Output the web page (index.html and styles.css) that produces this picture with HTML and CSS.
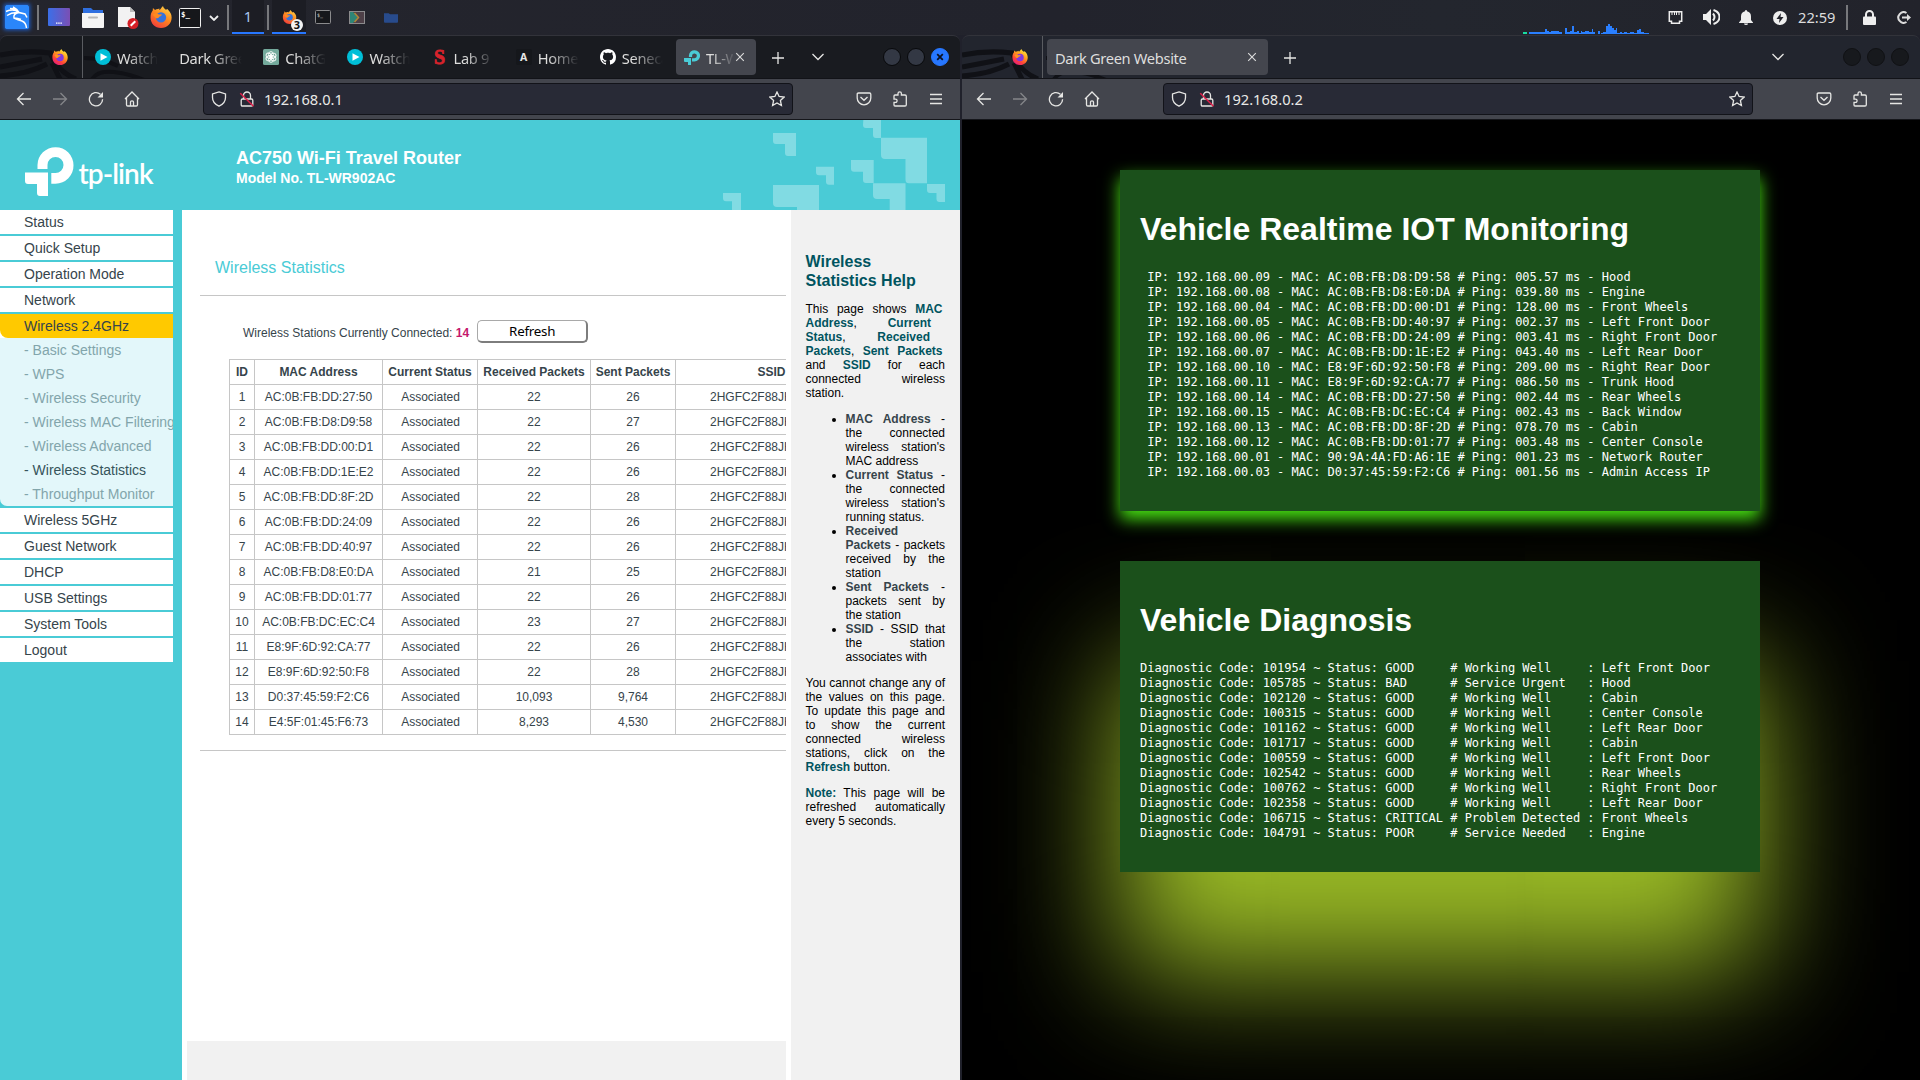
FILE: index.html
```html
<!DOCTYPE html>
<html lang="en">
<head>
<meta charset="utf-8">
<title>Desktop</title>
<link rel="stylesheet" href="styles.css">
</head>
<body>
<svg width="0" height="0" class="defs">
  <defs>
    <linearGradient id="ffg" x1=".8" y1="0" x2=".2" y2="1"><stop offset="0" stop-color="#fff03f"/><stop offset=".4" stop-color="#ff9a1f"/><stop offset=".7" stop-color="#ff4538"/><stop offset="1" stop-color="#e31587"/></linearGradient>
    <linearGradient id="ffo" x1=".8" y1="0" x2=".2" y2="1"><stop offset="0" stop-color="#ffd64a"/><stop offset=".45" stop-color="#ff8b1e"/><stop offset="1" stop-color="#f0383e"/></linearGradient>
    <linearGradient id="desk" x1="0" y1="0" x2="1" y2="0"><stop offset="0" stop-color="#3b6fe8"/><stop offset="1" stop-color="#7b4fb4"/></linearGradient>
  </defs>
  <symbol id="firefox" viewBox="0 0 24 24">
    <path fill="url(#ffg)" d="M12 24C5.300 24 .6 19 .6 12.600c0-3.300.8-5.600 2.400-7.700l.2-2.600 2.300 2c.9-.7 2-1 3.200-1L10.300 2.800 10 4.300c1.700-.2 2-2.700 4.200-4.300.3 1.900 1.600 2.700 3.200 4.200l1.500-.9c3 2.700 4.700 5.500 4.700 9.300C23.600 19.200 18.700 24 12 24z"/>
    <circle cx="12" cy="12.800" r="5.600" fill="#8038e0"/>
    <path fill="#ff9420" d="M3.600 9.500c2-2 4.200-1.700 6.200-.3l3-.1c.2 1.300-.9 2-2.700 2.600-.8 1.900-2.500 1.900-3.600 1.700z"/>
  </symbol>
  <symbol id="firefox-old" viewBox="0 0 24 24">
    <path fill="url(#ffo)" d="M12 24C5.300 24 .6 19 .6 12.600c0-3.300.8-5.600 2.400-7.700l.2-2.600 2.300 2c.9-.7 2-1 3.200-1L10.300 2.800 10 4.300c1.700-.2 2-2.700 4.200-4.300.3 1.900 1.600 2.700 3.200 4.200l1.500-.9c3 2.700 4.700 5.500 4.700 9.300C23.600 19.200 18.700 24 12 24z"/>
    <circle cx="12" cy="12.500" r="5.600" fill="#3573dd"/>
    <path fill="#ff8a20" d="M3 9.500c2-2 4.800-1.700 6.800-.3l3-.1c.2 1.300-.9 2-2.700 2.600-.8 1.900-2.500 1.900-3.600 1.700z"/>
  </symbol>
  <symbol id="back" viewBox="0 0 16 16"><path d="M15 8H1.500M7.500 2l-6 6 6 6"/></symbol>
  <symbol id="forward" viewBox="0 0 16 16"><path d="M1 8h13.500M8.500 2l6 6-6 6"/></symbol>
  <symbol id="reload" viewBox="0 0 16 16"><path d="M14.600 8.200A6.600 6.600 0 1 1 12.400 3.300"/><path class="fill" d="M15 1v5.500H9.500z"/></symbol>
  <symbol id="home" viewBox="0 0 16 16"><path d="M1 8l7-7 7 7M2.500 7v6.700q0 1.300 1.300 1.300h8.400q1.300 0 1.300-1.300V7M6.500 15v-4q0-1.200 1.500-1.200T9.500 11v4"/></symbol>
  <symbol id="shield" viewBox="0 0 16 16"><path d="M8 .9L14.500 3v3.500c0 4-2.600 7-6.500 8.700C4.100 13.500 1.500 10.500 1.500 6.500V3z"/></symbol>
  <symbol id="lock-off" viewBox="0 0 16 16"><path d="M4.500 8V4.500a3.500 3.500 0 0 1 7 0V8M3.500 8h9q1.300 0 1.300 1.300v4.400q0 1.300-1.300 1.300h-9q-1.300 0-1.300-1.300V9.300Q2.200 8 3.500 8z"/><path d="M1.300 2.300l13.200 12.900" class="slash"/></symbol>
  <symbol id="star" viewBox="0 0 16 16"><path d="M8 1l2.100 4.500 5 .6-3.700 3.400 1 5L8 12l-4.400 2.500 1-5L.9 6.100l5-.6z"/></symbol>
  <symbol id="pocket" viewBox="0 0 16 16"><path d="M2.500 2h11q1.300 0 1.300 1.300V7A6.800 6.800 0 0 1 1.200 7V3.300Q1.200 2 2.500 2z"/><path d="M4.500 6L8 9.300 11.500 6"/></symbol>
  <symbol id="puzzle" viewBox="0 0 16 16"><path d="M2 5q0-1 1-1h3V2.600a1.700 1.700 0 0 1 3.400 0V4H13q1.300 0 1.300 1.300v8.500q0 1.200-1.300 1.200H3q-1 0-1-1v-2.600h1.500a1.600 1.600 0 0 0 0-3.200H2z"/></symbol>
  <symbol id="menu" viewBox="0 0 16 16"><path d="M2 3.500h12M2 8h12M2 12.500h12"/></symbol>
  <symbol id="plus" viewBox="0 0 16 16"><path d="M8 2v12M2 8h12"/></symbol>
  <symbol id="chev" viewBox="0 0 16 16"><path d="M2.500 5L8 10.500 13.500 5"/></symbol>
  <symbol id="x" viewBox="0 0 10 10"><path d="M1.200 1.200l7.600 7.600M8.800 1.200L1.200 8.800"/></symbol>
  <symbol id="play" viewBox="0 0 16 16"><circle cx="8" cy="8" r="8" fill="#00bfd8"/><path fill="#fff" d="M5.500 4.200l7 3.800-7 3.800z"/></symbol>
  <symbol id="wings" viewBox="0 0 146 42">
    <path fill="none" stroke="#101116" stroke-width="5" d="M0 19Q25 14 50 17 58 36 76 43M0 31Q22 27 42 23M0 40Q28 38 47 28M52 27l8 16"/>
    <path fill="none" stroke="#101116" stroke-width="4" d="M92 43q6-9 22-7t30 8M84 22q18 0 34 8"/>
  </symbol>
</svg>

<header class="panel">
  <svg class="kali" viewBox="0 0 24 24"><rect width="24" height="24" rx="1.500" fill="#2a86fa"/><path fill="none" stroke="#fff" stroke-width="1.500" d="M1 6.500Q8 3.500 14 7M2 10.500Q7 7 13 7.500M5 3.500q6 0 9 4M8 2q4 2 6 5.500l6 1.500 2 3.500M14 7.500q-6 1-5 5.500 4 2 8 3 4 1.500 4.500 7M9 13q4 0 7 1.500"/></svg>
  <i class="sep s1"></i>
  <svg class="p-desk" viewBox="0 0 22 18"><rect width="22" height="18" rx="1" fill="url(#desk)"/><path stroke="#fff" stroke-width="1.300" stroke-dasharray="1.500 .7" d="M8 15.200h6.200"/></svg>
  <svg class="p-files" viewBox="0 0 22 20"><path fill="#2f6fe0" d="M1 0h8l2 2h10v6H1z"/><path fill="#f4f4f4" d="M0 5h22v14q0 1-1 1H1q-1 0-1-1z"/><path stroke="#b9b9b9" stroke-width="2" stroke-linecap="round" d="M7 9.500h8"/></svg>
  <svg class="p-doc" viewBox="0 0 22 22"><path fill="#f2f2f2" d="M0 0h12l5 5v15H0z"/><path fill="#bbb" d="M12 0l5 5h-5z"/><circle cx="15" cy="16.500" r="5.500" fill="#d41f26"/><path stroke="#fff" stroke-width="2" d="M12.700 18.800l4.600-4.600"/></svg>
  <svg class="p-ff"><use href="#firefox-old"/></svg>
  <svg class="p-term" viewBox="0 0 22 20"><rect x=".5" y=".5" width="21" height="19" rx="1" fill="#16171b" stroke="#f0f0f0"/><text x="2" y="9" class="prompt">$_</text></svg>
  <svg class="p-chev" viewBox="0 0 10 6"><path d="M1 1l4 4 4-4" fill="none" stroke="#eee" stroke-width="1.800"/></svg>
  <i class="sep s2"></i>
  <div class="workspace">1</div>
  <i class="sep s3"></i>
  <div class="task-ff"><svg class="task-ico"><use href="#firefox-old"/></svg><b class="badge">3</b></div>
  <svg class="t-term" viewBox="0 0 16 14"><rect x=".5" y=".5" width="15" height="13" rx="1" fill="#16171b" stroke="#8b8b8d"/><text x="2" y="6.500" class="prompt-s">$_</text></svg>
  <svg class="t-code" viewBox="0 0 16 13"><rect x=".5" y=".5" width="15" height="12" fill="#4e4048" stroke="#8b8b8d"/><path fill="#2f8577" d="M1 1h3l5 5.500L4 12H1z"/><path fill="none" stroke="#b18637" stroke-width="1.500" d="M5.500 2l4 4.500-4 4.500"/></svg>
  <svg class="t-folder" viewBox="0 0 15 11"><path fill="#284b8c" d="M0 1h5l1.500 1H15v8q0 1-1 1H1q-1 0-1-1z"/></svg>
  <span class="grow"></span>
  <svg class="graph" viewBox="0 0 134 10"><path fill="#19dca0" d="M0 8h4v2H0z"/><path fill="#2a7fff" d="M6 8h16V5h2v2h2v1h2V7h8v1h3v2H6zM42 4h2v4h3V7h2V2h2v6h3V7h2v2h2V7h1v1h3V7h4v1h3V5h1v3h2v2H42zM75 7h2v3h-2zM78 9h2V8h3V2h2V0h2v2h2v2h2v2h2V4h1v5h3V8h2v1h2V8h3v1h3V8h4v1h3V6h2V5h2v3h3v1h5v1H78z"/></svg>
  <svg class="r-net" viewBox="0 0 14 13"><path fill="none" stroke="#eee" stroke-width="1.500" d="M.8.8h12.400v9.400H11v2H3v-2H.8z"/><path stroke="#eee" d="M3.500 1v3M6 1v3M8 1v3M10.500 1v3"/></svg>
  <svg class="r-vol" viewBox="0 0 17 16"><path fill="#eee" d="M0 5h3l5-5v16l-5-5H0z"/><path fill="none" stroke="#eee" stroke-width="2" d="M10 4.500q3 3.500 0 7M10.500 1q6 2 6 7t-6 7"/></svg>
  <svg class="r-bell" viewBox="0 0 14 15"><path fill="#eee" d="M7 0q1 0 1 1.200 4 .8 4 5.300v3.500l2 2.500v.5H0v-.5L2 10V6.500Q2 2 6 1.200 6 0 7 0zM5 13.500h4Q9 15 7 15t-2-1.500z"/></svg>
  <svg class="r-pow" viewBox="0 0 14 14"><circle cx="7" cy="7" r="7" fill="#eee"/><path fill="#23242c" d="M8 2L3.500 8H6.500L6 12 10.500 6H7.500z"/></svg>
  <span class="clock">22:59</span>
  <i class="sep s4"></i>
  <svg class="r-lock" viewBox="0 0 13 15"><path fill="none" stroke="#eee" stroke-width="2" d="M3 7V4.500a3.500 3.500 0 0 1 7 0V7"/><rect y="6.500" width="13" height="8.500" rx="1" fill="#eee"/></svg>
  <svg class="r-out" viewBox="0 0 14 13"><path fill="none" stroke="#ddd" stroke-width="2" d="M9.500 2A5.300 5.300 0 1 0 9.500 11"/><path fill="#ddd" d="M5 5.500h5V3l4 3.500L10 10V7.500H5z"/></svg>
</header>

<main class="desktop">
<section class="window win-left">
  <div class="titlebar">
    <svg class="wings"><use href="#wings"/></svg>
    <div class="pinned"><svg class="fav"><use href="#firefox"/></svg></div>
    <div class="tab"><svg class="fav"><use href="#play"/></svg><span class="tt">Watch</span></div>
    <div class="tab"><span class="tt">Dark Green</span></div>
    <div class="tab"><svg class="fav" viewBox="0 0 16 16"><rect width="16" height="16" rx="1.500" fill="#74aa9c"/><g fill="none" stroke="#fff" stroke-width=".9"><ellipse cx="8" cy="5.600" rx="2.400" ry="3"/><ellipse cx="8" cy="5.600" rx="2.400" ry="3" transform="rotate(60 8 8)"/><ellipse cx="8" cy="5.600" rx="2.400" ry="3" transform="rotate(120 8 8)"/><ellipse cx="8" cy="5.600" rx="2.400" ry="3" transform="rotate(180 8 8)"/><ellipse cx="8" cy="5.600" rx="2.400" ry="3" transform="rotate(240 8 8)"/><ellipse cx="8" cy="5.600" rx="2.400" ry="3" transform="rotate(300 8 8)"/></g></svg><span class="tt">ChatGPT</span></div>
    <div class="tab"><svg class="fav"><use href="#play"/></svg><span class="tt">Watch</span></div>
    <div class="tab"><svg class="fav" viewBox="0 0 16 16"><text x="2" y="15" class="seneca">S</text></svg><span class="tt">Lab 9 | S</span></div>
    <div class="tab"><svg class="fav" viewBox="0 0 16 16"><rect width="16" height="16" rx="2" fill="#15171b"/><text x="4" y="12" class="fav-a">A</text></svg><span class="tt">Home |</span></div>
    <div class="tab"><svg class="fav" viewBox="0 0 16 16"><path fill="#fff" d="M8 0C3.580 0 0 3.580 0 8c0 3.540 2.290 6.530 5.470 7.590.4.070.55-.17.55-.38 0-.19-.01-.82-.01-1.490-2.010.37-2.530-.49-2.690-.94-.09-.23-.48-.94-.82-1.130-.28-.15-.68-.52-.01-.53.63-.01 1.080.58 1.230.82.72 1.210 1.870.87 2.330.66.070-.52.28-.87.51-1.070-1.780-.2-3.640-.89-3.640-3.950 0-.87.31-1.590.82-2.150-.08-.2-.36-1.020.08-2.120 0 0 .67-.21 2.200.82.64-.18 1.320-.27 2-.27s1.360.09 2 .27c1.530-1.040 2.200-.82 2.200-.82.44 1.100.16 1.920.08 2.120.51.56.82 1.270.82 2.150 0 3.070-1.870 3.750-3.650 3.950.29.25.54.73.54 1.480 0 1.070-.01 1.930-.01 2.200 0 .21.15.46.55.38A8.010 8.010 0 0 0 16 8c0-4.420-3.580-8-8-8z"/></svg><span class="tt">Seneca</span></div>
    <div class="tab active"><svg class="fav" viewBox="0 0 16 16"><path fill="none" stroke="#4acbd6" stroke-width="3.200" d="M6.500 8V6.500a4 4 0 1 1 4 4.300H8"/><path fill="#4acbd6" d="M0 9h7v7H4v-3H1q-1 0-1-1z"/></svg><span class="tt">TL-WR</span><svg class="close"><use href="#x"/></svg></div>
    <svg class="ico nt"><use href="#plus"/></svg>
    <svg class="ico all"><use href="#chev"/></svg>
    <span class="grow"></span>
    <div class="controls"><i></i><i></i><i class="c-close"><svg viewBox="0 0 10 10"><path d="M1.500 1.500l7 7M8.500 1.500l-7 7"/></svg></i></div>
  </div>
  <nav class="toolbar">
    <div class="slot"><svg class="ico"><use href="#back"/></svg></div>
    <div class="slot dim"><svg class="ico"><use href="#forward"/></svg></div>
    <div class="slot"><svg class="ico"><use href="#reload"/></svg></div>
    <div class="slot"><svg class="ico"><use href="#home"/></svg></div>
    <div class="urlbar"><svg class="ico"><use href="#shield"/></svg><svg class="ico lk"><use href="#lock-off"/></svg><span class="url">192.168.0.1</span><svg class="ico"><use href="#star"/></svg></div>
    <span class="grow"></span>
    <div class="slot"><svg class="ico"><use href="#pocket"/></svg></div>
    <div class="slot"><svg class="ico"><use href="#puzzle"/></svg></div>
    <div class="slot"><svg class="ico"><use href="#menu"/></svg></div>
  </nav>

  <div class="router">
    <div class="banner">
      <svg class="tplink" viewBox="0 0 132 52"><path fill="#fff" d="M12.500 23V19a18 18 0 0 1 36 .3 18 18 0 0 1-18 18.400h-4.200V27h4a8 8 0 0 0 8.200-8 8 8 0 0 0-16 0v4zM0 26.500h23V50h-8q-3 0-3-3v-9H3q-3 0-3-3z"/><text x="53.500" y="38" class="wordmark" textLength="75">tp-link</text></svg>
      <div class="model"><div class="m1">AC750 Wi-Fi Travel Router</div><div class="m2">Model No. TL-WR902AC</div></div>
      <svg class="decor" viewBox="720 0 240 90" fill="#81dbe3"><path d="M863.300 0H881V18h-5q-3 0-3-3V8h-7q-3 0-3-3zM881 17.700h46v45.600h-18q-3.500 0-3.500-3.500V39H885q-4 0-4-4zM773 13h23v23h-8q-3 0-3-3v-9h-9q-3 0-3-3zM816 46.700h18v18h-5q-3 0-3-3v-6.400h-7q-3 0-3-3zM851 40h22.700v23H866q-3 0-3-3v-8.300h-9q-3 0-3-3zM873 63.300h32.500V90h-15.800V79H877q-4 0-4-4zM927 64h18v18h-5.500q-3 0-3-3v-6H930q-3 0-3-3zM773 65h46v25h-22v-3h-20q-4 0-4-4zM723 73h18v17h-9v-8.700h-6q-3 0-3-3z"/></svg>
    </div>
    <div class="frames">
      <ul class="menu">
        <li>Status</li><li>Quick Setup</li><li>Operation Mode</li><li>Network</li>
        <li class="open"><span>Wireless 2.4GHz</span></li>
        <li class="group">
          <div>- Basic Settings</div><div>- WPS</div><div>- Wireless Security</div><div>- Wireless MAC Filtering</div><div>- Wireless Advanced</div><div class="cur">- Wireless Statistics</div><div>- Throughput Monitor</div>
        </li>
        <li>Wireless 5GHz</li><li>Guest Network</li><li>DHCP</li><li>USB Settings</li><li>System Tools</li><li>Logout</li>
      </ul>
      <div class="content">
        <h2>Wireless Statistics</h2>
        <div class="rule"></div>
        <div class="count"><span>Wireless Stations Currently Connected: <b>14</b></span><button>Refresh</button></div>
        <table>
          <tr><th class="c1">ID</th><th class="c2">MAC Address</th><th class="c3">Current Status</th><th class="c4">Received Packets</th><th class="c5">Sent Packets</th><th class="c6">SSID</th></tr>
          <tr><td>1</td><td>AC:0B:FB:DD:27:50</td><td>Associated</td><td>22</td><td>26</td><td>2HGFC2F88JH</td></tr>
          <tr><td>2</td><td>AC:0B:FB:D8:D9:58</td><td>Associated</td><td>22</td><td>27</td><td>2HGFC2F88JH</td></tr>
          <tr><td>3</td><td>AC:0B:FB:DD:00:D1</td><td>Associated</td><td>22</td><td>26</td><td>2HGFC2F88JH</td></tr>
          <tr><td>4</td><td>AC:0B:FB:DD:1E:E2</td><td>Associated</td><td>22</td><td>26</td><td>2HGFC2F88JH</td></tr>
          <tr><td>5</td><td>AC:0B:FB:DD:8F:2D</td><td>Associated</td><td>22</td><td>28</td><td>2HGFC2F88JH</td></tr>
          <tr><td>6</td><td>AC:0B:FB:DD:24:09</td><td>Associated</td><td>22</td><td>26</td><td>2HGFC2F88JH</td></tr>
          <tr><td>7</td><td>AC:0B:FB:DD:40:97</td><td>Associated</td><td>22</td><td>26</td><td>2HGFC2F88JH</td></tr>
          <tr><td>8</td><td>AC:0B:FB:D8:E0:DA</td><td>Associated</td><td>21</td><td>25</td><td>2HGFC2F88JH</td></tr>
          <tr><td>9</td><td>AC:0B:FB:DD:01:77</td><td>Associated</td><td>22</td><td>26</td><td>2HGFC2F88JH</td></tr>
          <tr><td>10</td><td>AC:0B:FB:DC:EC:C4</td><td>Associated</td><td>23</td><td>27</td><td>2HGFC2F88JH</td></tr>
          <tr><td>11</td><td>E8:9F:6D:92:CA:77</td><td>Associated</td><td>22</td><td>26</td><td>2HGFC2F88JH</td></tr>
          <tr><td>12</td><td>E8:9F:6D:92:50:F8</td><td>Associated</td><td>22</td><td>28</td><td>2HGFC2F88JH</td></tr>
          <tr><td>13</td><td>D0:37:45:59:F2:C6</td><td>Associated</td><td>10,093</td><td>9,764</td><td>2HGFC2F88JH</td></tr>
          <tr><td>14</td><td>E4:5F:01:45:F6:73</td><td>Associated</td><td>8,293</td><td>4,530</td><td>2HGFC2F88JH</td></tr>
        </table>
        <div class="rule r2"></div>
        <div class="grow"></div>
        <div class="footer"></div>
      </div>
      <aside class="help">
        <h3>Wireless<br>Statistics Help</h3>
        <div class="intro">
          <div class="l1">This page shows <b>MAC</b></div>
          <div class="l2"><b>Address</b>, <b>Current</b></div>
          <div class="l3"><b>Status</b>, <b>Received</b></div>
          <div class="l1"><b>Packets</b>, <b>Sent Packets</b></div>
          <div>and <b>SSID</b> for each</div>
          <div>connected wireless</div>
          <div class="last">station.</div>
        </div>
        <ul>
          <li><b>MAC Address</b> - the connected wireless station's MAC address</li>
          <li><b>Current Status</b> - the connected wireless station's running status.</li>
          <li><b>Received Packets</b> - packets received by the station</li>
          <li><b>Sent Packets</b> - packets sent by the station</li>
          <li><b>SSID</b> - SSID that the station associates with</li>
        </ul>
        <p>You cannot change any of the values on this page. To update this page and to show the current connected wireless stations, click on the <b>Refresh</b> button.</p>
        <p><b>Note:</b> This page will be refreshed automatically every 5 seconds.</p>
      </aside>
    </div>
  </div>
</section>

<section class="window win-right">
  <div class="titlebar">
    <svg class="wings"><use href="#wings"/></svg>
    <div class="pinned"><svg class="fav"><use href="#firefox"/></svg></div>
    <div class="tab active wide"><span class="tt">Dark Green Website</span><svg class="close"><use href="#x"/></svg></div>
    <svg class="ico nt"><use href="#plus"/></svg>
    <span class="grow"></span>
    <svg class="ico all"><use href="#chev"/></svg>
    <div class="controls"><i></i><i></i><i></i></div>
  </div>
  <nav class="toolbar">
    <div class="slot"><svg class="ico"><use href="#back"/></svg></div>
    <div class="slot dim"><svg class="ico"><use href="#forward"/></svg></div>
    <div class="slot"><svg class="ico"><use href="#reload"/></svg></div>
    <div class="slot"><svg class="ico"><use href="#home"/></svg></div>
    <div class="urlbar"><svg class="ico"><use href="#shield"/></svg><svg class="ico lk"><use href="#lock-off"/></svg><span class="url">192.168.0.2</span><svg class="ico"><use href="#star"/></svg></div>
    <span class="grow"></span>
    <div class="slot"><svg class="ico"><use href="#pocket"/></svg></div>
    <div class="slot"><svg class="ico"><use href="#puzzle"/></svg></div>
    <div class="slot"><svg class="ico"><use href="#menu"/></svg></div>
  </nav>
  <div class="vehicle">
    <article class="card realtime">
      <h1>Vehicle Realtime IOT Monitoring</h1>
<pre> IP: 192.168.00.09 - MAC: AC:0B:FB:D8:D9:58 # Ping: 005.57 ms - Hood
 IP: 192.168.00.08 - MAC: AC:0B:FB:D8:E0:DA # Ping: 039.80 ms - Engine
 IP: 192.168.00.04 - MAC: AC:0B:FB:DD:00:D1 # Ping: 128.00 ms - Front Wheels
 IP: 192.168.00.05 - MAC: AC:0B:FB:DD:40:97 # Ping: 002.37 ms - Left Front Door
 IP: 192.168.00.06 - MAC: AC:0B:FB:DD:24:09 # Ping: 003.41 ms - Right Front Door
 IP: 192.168.00.07 - MAC: AC:0B:FB:DD:1E:E2 # Ping: 043.40 ms - Left Rear Door
 IP: 192.168.00.10 - MAC: E8:9F:6D:92:50:F8 # Ping: 209.00 ms - Right Rear Door
 IP: 192.168.00.11 - MAC: E8:9F:6D:92:CA:77 # Ping: 086.50 ms - Trunk Hood
 IP: 192.168.00.14 - MAC: AC:0B:FB:DD:27:50 # Ping: 002.44 ms - Rear Wheels
 IP: 192.168.00.15 - MAC: AC:0B:FB:DC:EC:C4 # Ping: 002.43 ms - Back Window
 IP: 192.168.00.13 - MAC: AC:0B:FB:DD:8F:2D # Ping: 078.70 ms - Cabin
 IP: 192.168.00.12 - MAC: AC:0B:FB:DD:01:77 # Ping: 003.48 ms - Center Console
 IP: 192.168.00.01 - MAC: 90:9A:4A:FD:A6:1E # Ping: 001.23 ms - Network Router
 IP: 192.168.00.03 - MAC: D0:37:45:59:F2:C6 # Ping: 001.56 ms - Admin Access IP</pre>
    </article>
    <article class="card diagnosis">
      <h1>Vehicle Diagnosis</h1>
<pre>Diagnostic Code: 101954 ~ Status: GOOD     # Working Well     : Left Front Door
Diagnostic Code: 105785 ~ Status: BAD      # Service Urgent   : Hood
Diagnostic Code: 102120 ~ Status: GOOD     # Working Well     : Cabin
Diagnostic Code: 100315 ~ Status: GOOD     # Working Well     : Center Console
Diagnostic Code: 101162 ~ Status: GOOD     # Working Well     : Left Rear Door
Diagnostic Code: 101717 ~ Status: GOOD     # Working Well     : Cabin
Diagnostic Code: 100559 ~ Status: GOOD     # Working Well     : Left Front Door
Diagnostic Code: 102542 ~ Status: GOOD     # Working Well     : Rear Wheels
Diagnostic Code: 100762 ~ Status: GOOD     # Working Well     : Right Front Door
Diagnostic Code: 102358 ~ Status: GOOD     # Working Well     : Left Rear Door
Diagnostic Code: 106715 ~ Status: CRITICAL # Problem Detected : Front Wheels
Diagnostic Code: 104791 ~ Status: POOR     # Service Needed   : Engine</pre>
    </article>
  </div>
</section>
</main>
</body>
</html>
```
FILE: styles.css
```css
* { box-sizing: border-box; }
body { margin: 0; width: 1920px; height: 1080px; overflow: hidden; display: flex; flex-direction: column; background: #20222b; font-family: "Noto Sans", sans-serif; font-size: 14.67px; color: #e8e8e6; }
svg { display: block; flex: none; }
ul, p, h1, h2, h3, pre { margin: 0; padding: 0; }
.defs { position: absolute; }
.grow { flex: 1; }

/* top panel */
.panel { height: 35px; flex: none; display: flex; align-items: center; background: linear-gradient(90deg, #24252d, #22232c 55%, #23262e 75%, #22232b); }
.kali { width: 24px; height: 24px; margin: 0 8px 1px 5px; box-shadow: 0 0 4px 1px #1d5fd0; }
.sep { width: 2px; height: 25px; background: #77787c; }
.s1 { margin-right: 9px; }
.p-desk { width: 22px; height: 18px; margin: 0 12px 2px 0; }
.p-files { width: 22px; height: 20px; margin-right: 14px; }
.p-doc { width: 22px; height: 22px; margin-right: 10px; }
.p-ff { width: 22px; height: 22px; margin: 0 7px 1px 0; }
.p-term { width: 22px; height: 20px; margin-right: 8px; }
.p-chev { width: 10px; height: 6px; margin-right: 8px; }
.prompt { font: bold 7.5px "DejaVu Sans Mono", monospace; fill: #fff; }
.prompt-s { font: bold 5px "DejaVu Sans Mono", monospace; fill: #aaa; }
.s2 { margin-right: 3px; }
.workspace { width: 32px; height: 34px; align-self: flex-start; background: #1c1d24; border-bottom: 2px solid #2777ff; text-align: center; line-height: 32px; color: #a9c8ef; }
.s3 { margin: 0 3px 0 3px; }
.task-ff { width: 34px; height: 34px; align-self: flex-start; background: #1c1d24; border-bottom: 2px solid #2777ff; position: relative; display: flex; padding: 10px 0 0 10px; }
.task-ico { width: 15px; height: 14px; }
.badge { position: absolute; left: 19px; top: 19px; width: 12px; height: 12px; border-radius: 6px; background: #f2f2f2; color: #111; font: bold 11px/12px "Noto Sans", sans-serif; text-align: center; }
.t-term { width: 16px; height: 14px; margin: 0 18px 1px 9px; }
.t-code { width: 16px; height: 13px; margin: 0 19px 1px 0; }
.t-folder { width: 14px; height: 11px; }
.graph { width: 134px; height: 10px; align-self: flex-start; margin: 24px 11px 0 0; }
.r-net { width: 15px; height: 13px; margin: 0 20px 1px 0; }
.r-vol { width: 17px; height: 16px; margin: 0 19px 1px 0; }
.r-bell { width: 14px; height: 15px; margin: 0 20px 1px 0; }
.r-pow { width: 14px; height: 14px; margin-right: 11px; }
.clock { width: 48px; line-height: 32px; margin-top: -2px; color: #dcdcdc; }
.s4 { margin-right: 15px; }
.r-lock { width: 13px; height: 15px; margin-right: 21px; }
.r-out { width: 14px; height: 13px; margin-right: 9px; }

/* windows */
.desktop { display: flex; flex: 1; gap: 2px; background: #20212b; }
.window { display: flex; flex-direction: column; height: 1045px; overflow: hidden; }
.win-left { width: 960px; }
.win-right { width: 958px; }
.titlebar { position: relative; height: 44px; flex: none; display: flex; align-items: center; border-top: 1px solid #32333a; border-bottom: 1px solid #121318; border-radius: 7px 7px 0 0; background: #191b20; }
.win-right .titlebar { background: #22252e; }
.wings { position: absolute; left: 0; top: 0; width: 146px; height: 42px; }
.pinned { position: relative; width: 83px; height: 42px; padding: 13px 0 0 52px; border-right: 1px solid #5a5c61; margin-right: 4px; flex: none; }
.win-right .pinned { width: 81px; padding-left: 50px; }
.fav { width: 16px; height: 16px; flex: none; }
.seneca { font: bold 20px "Liberation Serif", serif; fill: #d8232c; stroke: #d8232c; stroke-width: .8; }
.fav-a { font: bold 10.5px "Noto Sans", sans-serif; fill: #e8e8e6; }
.tab { position: relative; width: 80px; height: 36px; margin-right: 4.150px; padding: 0 8px; display: flex; align-items: center; gap: 6px; flex: none; border-radius: 4px; }
.tt { flex: 1; overflow: hidden; white-space: nowrap; letter-spacing: -.33px; padding-top: 1px; -webkit-mask-image: linear-gradient(90deg, #000 calc(100% - 32px), transparent calc(100% - 1px)); mask-image: linear-gradient(90deg, #000 calc(100% - 32px), transparent calc(100% - 1px)); color: #dededd; }
.tab.active { background: #44464e; margin-right: 14px; padding-right: 11px; }
.tab.active .tt { margin-right: -4px; -webkit-mask-image: linear-gradient(90deg, #000 5px, transparent 30px); mask-image: linear-gradient(90deg, #000 5px, transparent 30px); }
.tab.wide { width: 221px; margin-right: 14px; }
.tab.wide .tt { -webkit-mask-image: none; mask-image: none; }
.close { width: 10px; height: 10px; fill: none; stroke: #ddd; stroke-width: 1.100; }
.ico { width: 16px; height: 16px; flex: none; fill: none; stroke: #e6e6e4; stroke-width: 1.300; }
.fill { fill: #e6e6e4; stroke: none; }
.slash { stroke: #e0204a; stroke-width: 1.500; }
.nt { margin-top: 1px; }
.all { margin-left: 24px; }
.win-right .all { margin: 0 57px 0 0; }
.controls { display: flex; gap: 6px; margin-right: 11px; }
.controls i { width: 18px; height: 18px; border-radius: 9px; background: #333844; border: 1px solid #08090b; }
.win-right .controls i { background: #17191d; border-color: #101114; }
.controls .c-close { background: #2777ff; border-color: #2777ff; padding: 4px; }
.c-close svg { width: 8px; height: 8px; stroke: #0b1020; stroke-width: 2.200; fill: none; }
.toolbar { height: 41px; flex: none; display: flex; align-items: center; background: #43454d; padding: 0 6px; border-bottom: 1px solid #15161b; }
.win-right .toolbar { padding-left: 4px; }
.slot { width: 36px; display: flex; justify-content: center; }
.dim { opacity: .4; }
.urlbar { width: 590px; height: 32px; margin-left: 53px; border: 1px solid #121319; border-radius: 4px; background: #282a36; display: flex; align-items: center; padding: 0 7px; }
.lk { margin-left: 12px; }
.url { flex: 1; margin-left: 9px; }

/* router page */
.router { flex: 1; display: flex; flex-direction: column; font-family: "Liberation Sans", Arial, sans-serif; background: #fff; }
.banner { height: 90px; background: #4acbd6; display: flex; color: #fff; font-weight: bold; }
.tplink { width: 132px; height: 52px; margin: 26px 79px 0 25px; }
.wordmark { font: 600 28px Lato, sans-serif; fill: #fff; }
.model { padding-top: 28px; width: 484px; }
.m1 { font-size: 18px; line-height: 20px; }
.m2 { font-size: 14px; line-height: 20px; }
.decor { width: 240px; height: 90px; }
.frames { flex: 1; display: flex; }
.menu { width: 182px; background: #4acbd6; list-style: none; color: #36444b; font-size: 14px; line-height: 24px; padding-right: 9px; }
.menu li { height: 24px; margin-bottom: 2px; padding-left: 24px; background: #fff; }
.menu .open { padding: 0; margin: 0; }
.menu .open span { display: block; padding-left: 24px; background: #ffc900; border-bottom-left-radius: 8px; }
.menu .group { height: 168px; background: #e3f7fa; border-bottom-left-radius: 7px; overflow: hidden; white-space: nowrap; color: #82a5ab; }
.menu .cur { color: #36545b; }
.content { width: 599px; margin-left: 5px; overflow: hidden; display: flex; flex-direction: column; color: #36444b; font-size: 12px; }
.content h2 { font-size: 16px; font-weight: normal; color: #4acbd6; margin: 48px 0 0 28px; line-height: 20px; }
.rule { height: 1px; flex: none; background: #c6c6c6; margin: 17px 0 0 13px; }
.r2 { margin-top: 15px; }
.count { height: 63px; display: flex; padding: 24px 0 0 56px; line-height: 27px; white-space: nowrap; }
.count b { color: #c4186c; }
button { width: 111px; height: 23px; margin-left: 8px; padding: 0; font: 13.333px "Noto Sans", sans-serif; letter-spacing: -.25px; border: 1px solid #a9a9a9; border-right: 2px solid #7d7d7d; border-bottom: 2px solid #7d7d7d; border-radius: 5px; background: #fff; color: #000; }
table { border-collapse: collapse; table-layout: fixed; width: 639px; margin-left: 42px; flex: none; text-align: center; }
td, th { height: 25px; padding: 0; border: 1px solid #c6c6c6; white-space: nowrap; overflow: hidden; line-height: 24px; }
.c1 { width: 25px; } .c2 { width: 128px; } .c3 { width: 95px; } .c4 { width: 113px; } .c5 { width: 85px; } .c6 { width: 192px; }
td:nth-child(3) { padding-left: 1px; }
td:last-child { text-align: left; padding-left: 34px; }
.footer { height: 39px; background: #f1f1f1; }
.help { flex: 1; margin-left: 5px; background: #f1f1f1; padding: 42px 15px 0 14.500px; font-size: 12px; line-height: 14px; color: #000; text-align: justify; }
.help h3 { font-size: 16px; line-height: 19px; color: #00545f; margin-bottom: 12px; text-align: left; }
.help b { color: #00545f; }
.intro div { text-align-last: justify; }
.intro .l1 { padding-right: 2.500px; }
.intro .l2 { padding-right: 14px; }
.intro .l3 { padding-right: 15px; }
.intro .last { text-align-last: left; }
.help ul { margin: 12px 0; padding-left: 40px; }
.help li b { color: #36444b; }
.help li::marker { font-size: 12px; }
.help p { margin-bottom: 12px; }

/* vehicle page */
.vehicle { flex: 1; background: #000; padding: 50px 160px 0 158px; }
.card { background: #1b501b; padding: 20px; color: #fff; margin-bottom: 50px; overflow: hidden; position: relative; }
.card h1 { font: bold 32px/37px "Liberation Sans", Arial, sans-serif; margin: 21px 0 22px; }
.card pre { font: 12px/15px "DejaVu Sans Mono", monospace; letter-spacing: -.01px; }
.realtime { height: 341px; z-index: 2; box-shadow: 0 8px 16px 0 #48e413; }
.diagnosis { height: 311px; z-index: 1; box-shadow: 0 100px 125px 0 #9bbc26; }
```
